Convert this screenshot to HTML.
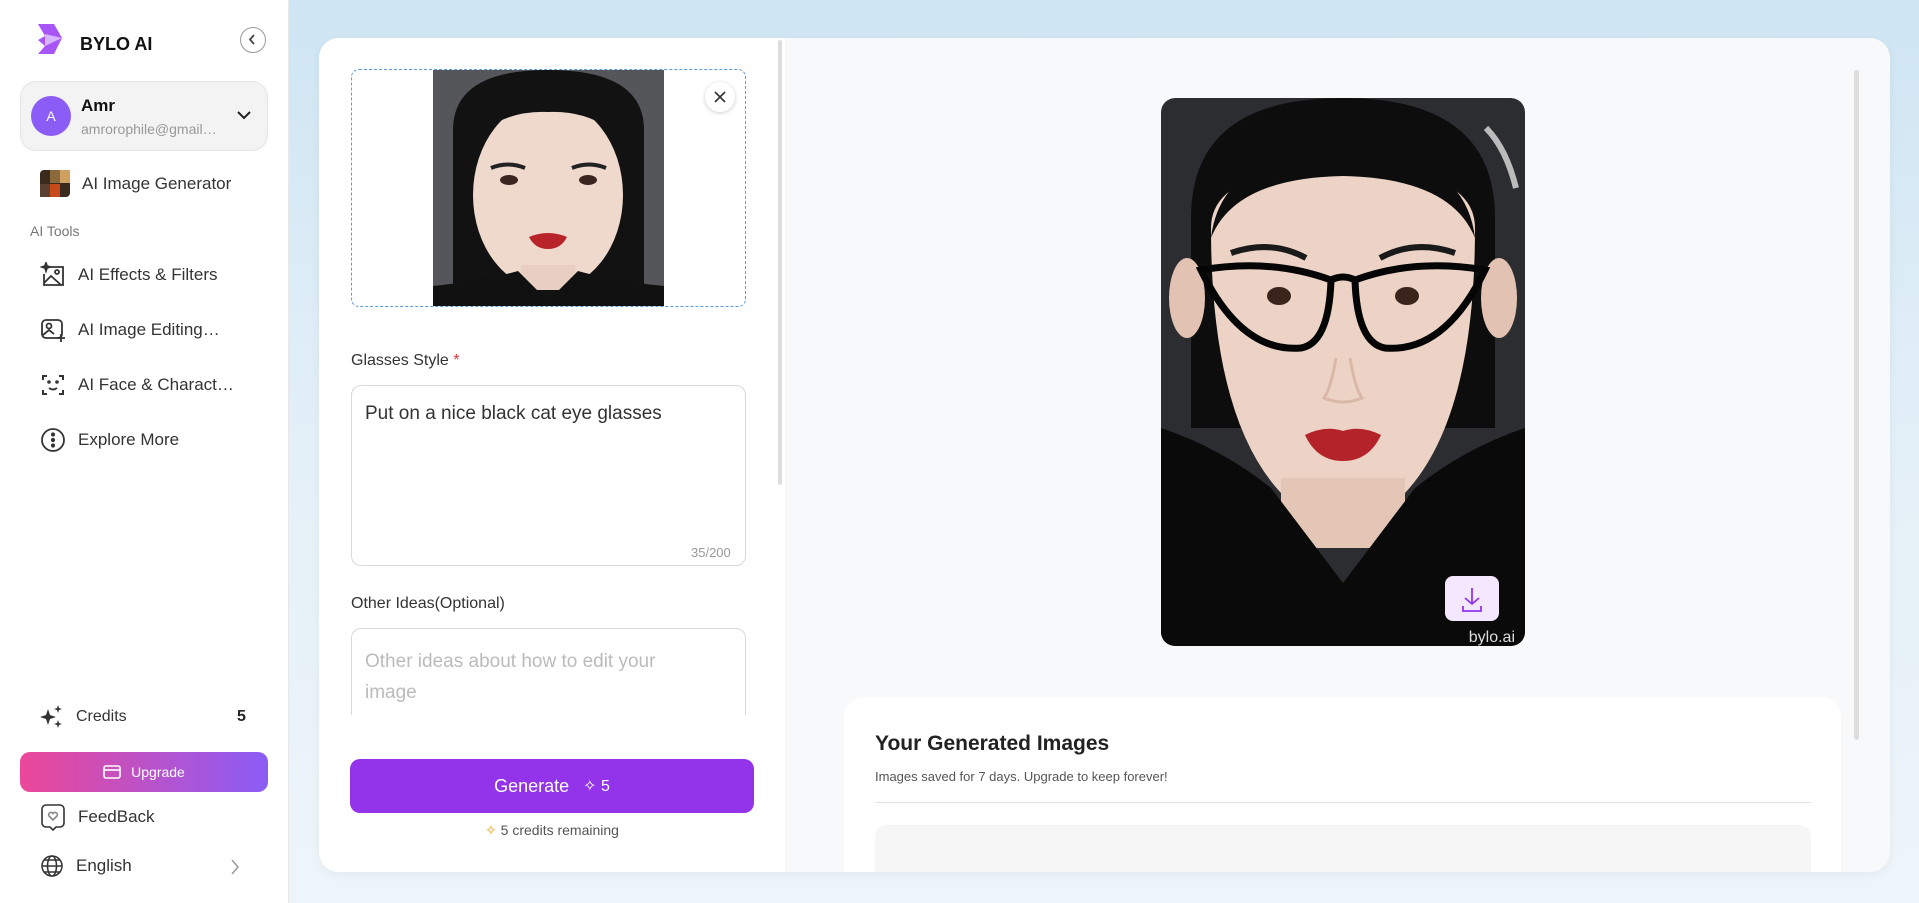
<!DOCTYPE html>
<html><head><meta charset="utf-8"><style>
*{box-sizing:border-box;margin:0;padding:0}
body{width:1919px;height:903px;overflow:hidden;font-family:"Liberation Sans",sans-serif;background:linear-gradient(180deg,#cfe5f3 0%,#e4f0f8 50%,#eef5fa 100%);position:relative;color:#222}
.abs{position:absolute}
.side{left:0;top:0;width:289px;height:903px;background:#fff;border-right:1px solid #e8e8e8}
.item{position:absolute;left:40px;display:flex;align-items:center;font-size:17px;color:#333}
.item svg{margin-right:12px}
</style></head><body>
<div class="abs side">
  <svg class="abs" style="left:36px;top:22px" width="28" height="34" viewBox="0 0 28 34"><path d="M2 2h16l8 14-8 16H2l7-8-7-6 7-4z" fill="#a855f7"/><path d="M9 12l17 4-17 8z" fill="#d8b4fe"/></svg>
  <div class="abs" style="left:80px;top:34px;font-size:18px;font-weight:bold;color:#111">BYLO AI</div>
  <div class="abs" style="left:240px;top:27px;width:26px;height:26px;border:1.5px solid #999;border-radius:50%;"><svg width="23" height="23" viewBox="0 0 23 23"><path d="M13 7l-4 4.5 4 4.5" stroke="#444" stroke-width="1.8" fill="none"/></svg></div>
  <div class="abs" style="left:20px;top:81px;width:248px;height:70px;background:#f3f3f3;border:1px solid #e5e5e5;border-radius:16px"></div>
  <div class="abs" style="left:31px;top:96px;width:40px;height:40px;border-radius:50%;background:#8b5cf6;color:#fff;font-size:14px;display:flex;align-items:center;justify-content:center">A</div>
  <div class="abs" style="left:81px;top:96px;font-size:17px;font-weight:bold;color:#111">Amr</div>
  <div class="abs" style="left:81px;top:121px;font-size:14px;color:#999">amrorophile@gmail…</div>
  <svg class="abs" style="left:236px;top:109px" width="16" height="12"><path d="M2 3l6 6 6-6" stroke="#222" stroke-width="2" fill="none"/></svg>
  <div class="item" style="top:170px"><svg width="30" height="27" viewBox="0 0 30 27"><rect width="30" height="27" rx="4" fill="#3a2a1e"/><rect x="10" y="0" width="10" height="13" fill="#8a6a3a"/><rect x="0" y="14" width="10" height="13" fill="#5a4030"/><rect x="10" y="14" width="10" height="13" fill="#c84a18"/><rect x="20" y="0" width="10" height="13" fill="#d0a060"/></svg>AI Image Generator</div>
  <div class="abs" style="left:30px;top:223px;font-size:14px;color:#777">AI Tools</div>
  <div class="item" style="top:262px"><svg width="26" height="26" viewBox="0 0 26 26" fill="none" stroke="#333" stroke-width="1.8"><path d="M10 5h13v18H4V12"/><circle cx="17" cy="10" r="2"/><path d="M4 21l7-7 10 9"/><path d="M6 1l1 3 3 1-3 1-1 3-1-3-3-1 3-1z" fill="#333"/></svg>AI Effects &amp; Filters</div>
  <div class="item" style="top:317px"><svg width="26" height="26" viewBox="0 0 26 26" fill="none" stroke="#333" stroke-width="1.8"><rect x="2" y="3" width="20" height="18" rx="4"/><circle cx="9" cy="9" r="2.5"/><path d="M3 18l6-5 5 4"/><path d="M21 17v8M17 21h8"/></svg>AI Image Editing…</div>
  <div class="item" style="top:372px"><svg width="26" height="26" viewBox="0 0 26 26" fill="none" stroke="#333" stroke-width="2"><path d="M3 8V4h4M19 4h4v4M23 18v4h-4M7 22H3v-4"/><path d="M9 16q4 3 8 0"/><circle cx="9" cy="10" r=".8"/><circle cx="17" cy="10" r=".8"/></svg>AI Face &amp; Charact…</div>
  <div class="item" style="top:427px"><svg width="26" height="26" viewBox="0 0 26 26" fill="none" stroke="#333" stroke-width="1.8"><circle cx="13" cy="13" r="11"/><circle cx="13" cy="7.5" r="1.2" fill="#333"/><circle cx="13" cy="13" r="1.2" fill="#333"/><circle cx="13" cy="18.5" r="1.2" fill="#333"/></svg>Explore More</div>
  <div class="item" style="top:705px"><svg width="24" height="24" viewBox="0 0 24 24" fill="#333"><path d="M8 4l2 6 6 2-6 2-2 6-2-6-6-2 6-2z"/><path d="M18 0l1 3 3 1-3 1-1 3-1-3-3-1 3-1zM18 15l1 3 3 1-3 1-1 3-1-3-3-1 3-1z"/></svg><span style="font-size:16px">Credits</span></div>
  <div class="abs" style="left:237px;top:708px;font-size:16px;font-weight:bold">5</div>
  <div class="abs" style="left:20px;top:752px;width:248px;height:40px;border-radius:10px;background:linear-gradient(90deg,#ec4899,#8b5cf6);color:#fff;font-size:14px;display:flex;align-items:center;justify-content:center"><svg width="18" height="16" viewBox="0 0 18 16" fill="none" stroke="#fff" stroke-width="1.6" style="margin-right:10px"><rect x="1" y="2" width="16" height="12" rx="2"/><path d="M1 6h16"/></svg>Upgrade</div>
  <div class="item" style="top:803px"><svg width="26" height="28" viewBox="0 0 26 28" fill="none" stroke="#333" stroke-width="1.6"><path d="M6 2h14a4 4 0 014 4v14a4 4 0 01-4 4h-4l-3 3-3-3H6a4 4 0 01-4-4V6a4 4 0 014-4z"/><path d="M13 17l-4-4a2.3 2.3 0 014-2.5 2.3 2.3 0 014 2.5z" stroke="#888"/></svg>FeedBack</div>
  <div class="item" style="top:854px"><svg width="24" height="24" viewBox="0 0 24 24" fill="none" stroke="#333" stroke-width="1.5"><circle cx="12" cy="12" r="10"/><ellipse cx="12" cy="12" rx="4.5" ry="10"/><path d="M2 12h20M4 6h16M4 18h16"/></svg>English</div>
  <svg class="abs" style="left:229px;top:858px" width="12" height="18"><path d="M3 2l6 7-6 7" stroke="#999" stroke-width="1.5" fill="none"/></svg>
</div>

<div class="abs" style="left:319px;top:38px;width:1571px;height:834px;border-radius:20px;background:#f8f9fb;overflow:hidden;box-shadow:0 2px 10px rgba(0,0,0,.05)">
  <div class="abs" style="left:0;top:0;width:466px;height:834px;background:#fff"></div>
  <div class="abs" style="left:459px;top:2px;width:4px;height:445px;background:#ddd;border-radius:2px"></div>
  <div class="abs" style="left:32px;top:31px;width:395px;height:238px;border:1.5px dashed #5b9be0;border-radius:8px"></div>
  <svg class="abs" style="left:114px;top:32px" width="231" height="236" viewBox="0 0 231 236">
    <rect width="231" height="236" fill="#55565a"/>
    <path d="M20 236V60Q20 0 115 0Q211 0 211 60V236z" fill="#121212"/>
    <ellipse cx="115" cy="125" rx="75" ry="95" fill="#efd8cc"/>
    <path d="M40 70Q50 25 115 22Q180 25 190 70Q160 40 115 42Q70 40 40 70z" fill="#121212"/>
    <rect x="88" y="195" width="54" height="25" fill="#e8cfc2"/>
    <path d="M0 236v-20q50-5 85-15l30 30 30-30q35 10 86 15v20z" fill="#111"/>
    <path d="M58 98q17-7 34 0M139 98q17-7 34 0" stroke="#222" stroke-width="4" fill="none"/>
    <ellipse cx="76" cy="110" rx="9" ry="5" fill="#3a2520"/><ellipse cx="155" cy="110" rx="9" ry="5" fill="#3a2520"/>
    <path d="M96 167q19-8 38 0q-6 12-19 12t-19-12z" fill="#b8242a"/>
  </svg>
  <div class="abs" style="left:386px;top:44px;width:30px;height:30px;border-radius:50%;background:#fff;box-shadow:0 1px 4px rgba(0,0,0,.2);display:flex;align-items:center;justify-content:center"><svg width="12" height="12"><path d="M1 1l10 10M11 1L1 11" stroke="#333" stroke-width="1.6"/></svg></div>
  <div class="abs" style="left:32px;top:314px;font-size:16px;color:#333">Glasses Style <span style="color:#e53935">*</span></div>
  <div class="abs" style="left:32px;top:347px;width:395px;height:181px;border:1px solid #d9d9d9;border-radius:10px"></div>
  <div class="abs" style="left:46px;top:365px;font-size:19px;color:#333">Put on a nice black cat eye glasses</div>
  <div class="abs" style="left:372px;top:507px;font-size:13px;color:#999">35/200</div>
  <div class="abs" style="left:32px;top:557px;font-size:16px;color:#333">Other Ideas(Optional)</div>
  <div class="abs" style="left:32px;top:590px;width:395px;height:120px;border:1px solid #d9d9d9;border-radius:10px;border-bottom:none"></div>
  <div class="abs" style="left:0;top:677px;width:466px;height:40px;background:#fff"></div>
  <div class="abs" style="left:46px;top:608px;font-size:19px;color:#bbb;line-height:31px;width:330px">Other ideas about how to edit your image</div>
  <div class="abs" style="left:31px;top:721px;width:404px;height:54px;border-radius:10px;background:#9333ea;color:#fff;font-size:18px;display:flex;align-items:center;justify-content:center">Generate<span style="margin-left:14px;font-size:16px">✧ 5</span></div>
  <div class="abs" style="left:0;top:784px;width:466px;text-align:center;font-size:14px;color:#555"><span style="color:#f59e0b">✧</span> 5 credits remaining</div>

  <svg class="abs" style="left:842px;top:60px;border-radius:14px" width="364" height="548" viewBox="0 0 364 548">
    <rect width="364" height="548" rx="14" fill="#2c2d31"/>
    <path d="M30 330V120Q30 0 182 0Q334 0 334 120V330z" fill="#0d0d0d"/>
    <ellipse cx="26" cy="200" rx="18" ry="40" fill="#e2c2b2"/><ellipse cx="338" cy="200" rx="18" ry="40" fill="#e2c2b2"/>
    <path d="M50 130Q50 320 120 395Q150 420 182 420Q214 420 244 395Q314 320 314 130Q314 70 182 68Q50 70 50 130z" fill="#ecd3c5"/>
    <path d="M50 140Q60 55 182 50Q304 55 314 140Q290 80 182 78Q74 80 50 140z" fill="#0d0d0d"/>
    <rect x="120" y="380" width="124" height="70" fill="#e3c6b6"/>
    <path d="M0 548V330q60 20 110 60l72 95 72-95q50-40 110-60v218z" fill="#0a0a0a"/>
    <path d="M70 155q40-14 75 5M219 160q35-19 75-5" stroke="#1a1a1a" stroke-width="6" fill="none"/>
    <path d="M40 172Q110 160 170 182Q168 245 140 250Q80 255 40 172z" fill="none" stroke="#050505" stroke-width="7"/>
    <path d="M324 172Q254 160 194 182Q196 245 224 250Q284 255 324 172z" fill="none" stroke="#050505" stroke-width="7"/>
    <path d="M170 182q12-6 24 0" stroke="#050505" stroke-width="7" fill="none"/>
    <ellipse cx="118" cy="198" rx="12" ry="9" fill="#3a241c"/><ellipse cx="246" cy="198" rx="12" ry="9" fill="#3a241c"/>
    <path d="M144 337q20-10 38-4q18-6 38 4q-12 26-38 26t-38-26z" fill="#b5232a"/>
    <path d="M175 260q-5 30-12 40q19 8 38 0q-7-10-12-40" stroke="#d9b8a8" stroke-width="3" fill="none"/>
    <path d="M325 30q20 20 30 60" stroke="#bbb" stroke-width="6" fill="none"/>
    <rect x="284" y="478" width="54" height="45" rx="8" fill="#f3e8ff"/>
    <path d="M311 490v16M304 500l7 6 7-6M302 508v5h18v-5" stroke="#9333ea" stroke-width="1.8" fill="none"/>
    <text x="354" y="544" font-family="Liberation Sans" font-size="16" fill="#ddd" text-anchor="end">bylo.ai</text>
  </svg>
  <div class="abs" style="left:1535px;top:32px;width:5px;height:670px;background:#ddd;border-radius:3px"></div>
  <div class="abs" style="left:525px;top:659px;width:997px;height:220px;background:#fff;border-radius:20px"></div>
  <div class="abs" style="left:556px;top:694px;font-size:21px;font-weight:bold;color:#222">Your Generated Images</div>
  <div class="abs" style="left:556px;top:731px;font-size:13px;color:#555">Images saved for 7 days. Upgrade to keep forever!</div>
  <div class="abs" style="left:556px;top:764px;width:936px;height:1px;background:#e2e2e2"></div>
  <div class="abs" style="left:556px;top:787px;width:936px;height:60px;background:#f6f6f7;border-radius:12px"></div>
</div>
</body></html>
